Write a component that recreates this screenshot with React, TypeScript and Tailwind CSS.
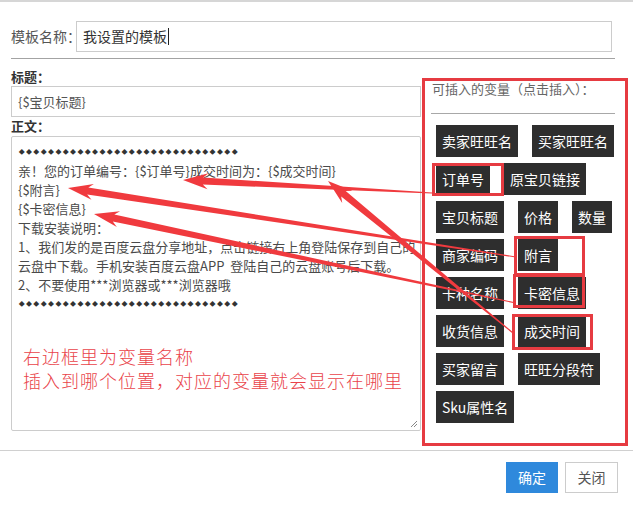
import React from 'react';

const variables = [
  '卖家旺旺名',
  '买家旺旺名',
  '订单号',
  '原宝贝链接',
  '宝贝标题',
  '价格',
  '数量',
  '商家编码',
  '附言',
  '卡种名称',
  '卡密信息',
  '收货信息',
  '成交时间',
  '买家留言',
  '旺旺分段符',
  'Sku属性名',
];

const bodyLines = [
  '亲！您的订单编号：{$订单号}成交时间为：{$成交时间}',
  '{$附言}',
  '{$卡密信息}',
  '下载安装说明：',
  '1、我们发的是百度云盘分享地址，点击链接右上角登陆保存到自己的',
  '云盘中下载。手机安装百度云盘APP  登陆自己的云盘账号后下载。',
  '2、不要使用***浏览器或***浏览器哦',
];

// annotation arrows: tail near the highlighted variable, head at the spot in the text
const arrows = [
  { x1: 432, y1: 193, x2: 183, y2: 180 },
  { x1: 516, y1: 257, x2: 68, y2: 188 },
  { x1: 516, y1: 303, x2: 94, y2: 214 },
  { x1: 513, y1: 333, x2: 328, y2: 181 },
];

// red boxes drawn over the variable buttons
const marks = [
  { left: 432, top: 163, width: 72, height: 33 },
  { left: 514, top: 236, width: 71, height: 40 },
  { left: 513, top: 274, width: 72, height: 34 },
  { left: 512, top: 314, width: 81, height: 36 },
];

function arrowPoints(x1: number, y1: number, x2: number, y2: number) {
  const dx = x2 - x1;
  const dy = y2 - y1;
  const len = Math.hypot(dx, dy);
  const ux = dx / len;
  const uy = dy / len;
  const nx = -uy;
  const ny = ux;
  const L = 20;
  const barb = 5;
  const H = 8;
  const w1 = 3.6;
  const w0 = 0.5;
  const bx = x2 - ux * L;
  const by = y2 - uy * L;
  const cx = x2 - ux * (L + barb);
  const cy = y2 - uy * (L + barb);
  const pts = [
    [x1 + nx * w0, y1 + ny * w0],
    [bx + nx * w1, by + ny * w1],
    [cx + nx * H, cy + ny * H],
    [x2, y2],
    [cx - nx * H, cy - ny * H],
    [bx - nx * w1, by - ny * w1],
    [x1 - nx * w0, y1 - ny * w0],
  ];
  return pts.map((p) => `${p[0].toFixed(1)},${p[1].toFixed(1)}`).join(' ');
}

function Diamonds() {
  return (
    <div className="flex h-[19px] items-center text-[#333]">
      {Array.from({ length: 30 }).map((_, i) => (
        <span key={i} className="inline-block w-[7.35px] text-center text-[6px] leading-none">
          ◆
        </span>
      ))}
    </div>
  );
}

export default function App() {
  return (
    <div className="relative h-[507px] w-[633px] overflow-hidden bg-white font-['Noto_Sans_CJK_SC','Noto_Sans',sans-serif] text-[#555]">
      {/* top edge of the dialog */}
      <div className="h-[2px] bg-[#d6d6d6]" />

      {/* template name */}
      <div className="flex items-center pl-[11px] pr-[21px] pt-[19px]">
        <span className="w-[65px] whitespace-nowrap text-[14px] leading-[31px] text-[#555]">模板名称：</span>
        <div className="flex h-[31px] flex-1 items-center border border-[#ccc] pl-[6px] text-[14px] text-[#333]">
          我设置的模板
          <span className="ml-px inline-block h-[17px] w-px bg-[#222]" />
        </div>
      </div>
      <div className="ml-[11px] mr-[18px] mt-[6px] h-px bg-[#a3a3a3]" />

      <div className="flex">
        {/* left form column */}
        <div className="ml-[11px] w-[410px] pt-[9px]">
          <div className="text-[13px] font-bold leading-[18px] text-[#333]">标题：</div>
          <div className="flex h-[31px] items-center border border-[#ccc] pl-[6px] text-[13px] text-[#555]">
            {'{$宝贝标题}'}
          </div>
          <div className="text-[13px] font-bold leading-[18px] text-[#333]">正文：</div>
          <div className="relative mt-px h-[295px] overflow-hidden whitespace-nowrap rounded-[2px] border border-[#ccc] pl-[6px] pt-[5px] text-[13px] leading-[19px] text-[#4a4a4a]">
            <Diamonds />
            {bodyLines.map((line) => (
              <div key={line} className="whitespace-pre">
                {line}
              </div>
            ))}
            <Diamonds />
            <div className="ml-[5px] mt-[31px] text-[18px] font-light leading-[24px] text-[#e9434a]">
              <div className="tracking-[1px]">右边框里为变量名称</div>
              <div className="tracking-[1px]">插入到哪个位置，对应的变量就会显示在哪里</div>
            </div>
            <svg className="absolute bottom-[2px] right-[2px]" width="8" height="8" viewBox="0 0 8 8">
              <path d="M7 1 L1 7 M7 4 L4 7" stroke="#888" strokeWidth="1" />
            </svg>
          </div>
        </div>

        {/* variable panel */}
        <div className="ml-px mt-[19px] h-[368px] w-[206px] border-[3px] border-[#e63b41] pl-[6px]">
          <div className="ml-px text-[13px] leading-[16px] text-[#666]">可插入的变量（点击插入）：</div>
          <div className="mt-[16px] h-px w-[184px] bg-[#a8a8a8]" />
          <div className="ml-[5px] mt-[11px] flex w-[182px] flex-wrap gap-x-[14px] gap-y-[6px]">
            {variables.map((v) => (
              <button
                key={v}
                className="h-[32px] whitespace-nowrap bg-[#2e2e2e] px-[6px] text-[14px] leading-[32px] text-white"
              >
                {v}
              </button>
            ))}
          </div>
        </div>
      </div>

      {/* footer */}
      <div className="mt-[4px] h-px bg-[#d0d0d0]" />
      <div className="flex justify-end gap-[7px] pr-[15px] pt-[11px]">
        <button className="h-[31px] w-[52px] bg-[#2f89dc] text-[14px] text-white">确定</button>
        <button className="h-[31px] w-[53px] border border-[#ccc] bg-white text-[14px] text-[#555]">关闭</button>
      </div>

      {/* annotation overlay */}
      {marks.map((m, i) => (
        <div
          key={i}
          className="pointer-events-none absolute border-[3px] border-[#e63b41]"
          style={{ left: m.left, top: m.top, width: m.width, height: m.height }}
        />
      ))}
      <svg className="pointer-events-none absolute left-0 top-0" width="633" height="507">
        {arrows.map((a, i) => (
          <polygon key={i} points={arrowPoints(a.x1, a.y1, a.x2, a.y2)} fill="#f03a3e" />
        ))}
      </svg>
    </div>
  );
}
